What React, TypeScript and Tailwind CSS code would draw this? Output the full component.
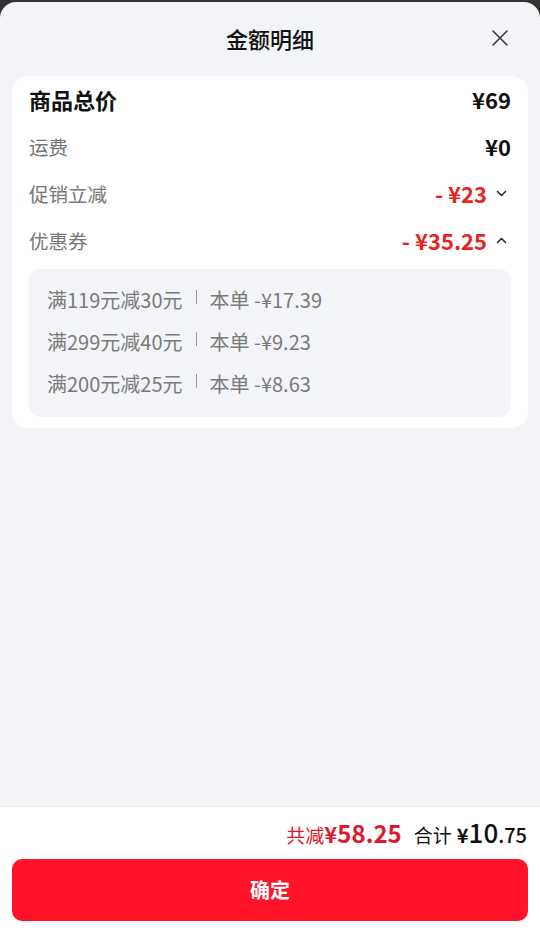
export default function App() {
  const coupons = [
    { rule: "满119元减30元", amount: "-¥17.39" },
    { rule: "满299元减40元", amount: "-¥9.23" },
    { rule: "满200元减25元", amount: "-¥8.63" },
  ];

  return (
    <div
      className="w-[540px] h-[931px] bg-[#333333] pt-[2px] overflow-hidden"
      style={{ fontFamily: '"Noto Sans CJK SC", "Noto Sans", sans-serif' }}
    >
      <div className="h-[929px] bg-[#f3f4f8] rounded-t-[16px] flex flex-col">
        {/* Header */}
        <div className="relative h-[74px] flex items-center justify-center">
          <h1 className="text-[22px] font-medium text-[#111] leading-none -mt-[2px]">金额明细</h1>
          <button className="absolute right-[30px] top-[26px] w-[20px] h-[20px] flex items-center justify-center">
            <svg width="18" height="18" viewBox="0 0 18 18" fill="none" stroke="#333" strokeWidth="1.5" strokeLinecap="round">
              <path d="M2 2L16 16M16 2L2 16" />
            </svg>
          </button>
        </div>

        {/* Card */}
        <div className="mx-3 bg-white rounded-[16px] pl-[17px] pr-[17px] pb-[11px]">
          <div className="h-[47px] flex items-center justify-between">
            <span className="text-[22px] font-bold text-[#111]">商品总价</span>
            <span className="text-[22px] font-bold text-[#111]">¥69</span>
          </div>
          <div className="h-[47px] flex items-center justify-between">
            <span className="text-[19.5px] text-[#777]">运费</span>
            <span className="text-[22px] font-bold text-[#111]">¥0</span>
          </div>
          <div className="h-[47px] flex items-center justify-between">
            <span className="text-[19.5px] text-[#777]">促销立减</span>
            <div className="flex items-center gap-[9px]">
              <span className="text-[22px] font-bold text-[#e8241c]">- ¥23</span>
              <svg className="mr-[4px]" width="11" height="7" viewBox="0 0 11 7" fill="none" stroke="#222" strokeWidth="1.5" strokeLinecap="round" strokeLinejoin="round">
                <path d="M1.5 1.5L5.5 5.5L9.5 1.5" />
              </svg>
            </div>
          </div>
          <div className="h-[47px] flex items-center justify-between">
            <span className="text-[19.5px] text-[#777]">优惠券</span>
            <div className="flex items-center gap-[9px]">
              <span className="text-[22px] font-bold text-[#e8241c]">- ¥35.25</span>
              <svg className="mr-[4px]" width="11" height="7" viewBox="0 0 11 7" fill="none" stroke="#222" strokeWidth="1.5" strokeLinecap="round" strokeLinejoin="round">
                <path d="M1.5 5.5L5.5 1.5L9.5 5.5" />
              </svg>
            </div>
          </div>

          <div className="mt-[5px] bg-[#f3f4f8] rounded-[12px] px-[18px] pt-[10px] pb-[12px]">
            {coupons.map((c) => (
              <div key={c.rule} className="h-[42px] flex items-center text-[20px] text-[#7a7a7a]">
                <span>{c.rule}</span>
                <span className="mx-[13px] w-px h-[14px] bg-[#9a9a9a] -mt-[6px]" />
                <span>本单 {c.amount}</span>
              </div>
            ))}
          </div>
        </div>

        <div className="flex-1" />

        {/* Footer */}
        <div className="bg-white border-t border-[#e6e6ea] h-[125px] px-3">
          <div className="h-[48px] flex items-center justify-end pr-[1px]">
            <div className="flex items-baseline gap-[12px]">
              <div className="flex items-baseline text-[#e0182d]">
                <span className="text-[19px]">共减</span>
                <span className="text-[22px] font-bold">¥</span>
                <span className="text-[24px] font-bold">58.25</span>
              </div>
              <div className="flex items-baseline text-[#111]">
                <span className="text-[19px] mr-[5px]">合计</span>
                <span className="text-[20px] font-bold">¥</span>
                <span className="text-[26px] font-medium">10</span>
                <span className="text-[20px] font-medium">.75</span>
              </div>
            </div>
          </div>
          <button className="mt-[4px] w-full h-[62px] rounded-[10px] bg-[#ff1429] text-white text-[20px] font-bold flex items-center justify-center">
            确定
          </button>
        </div>
      </div>
    </div>
  );
}
